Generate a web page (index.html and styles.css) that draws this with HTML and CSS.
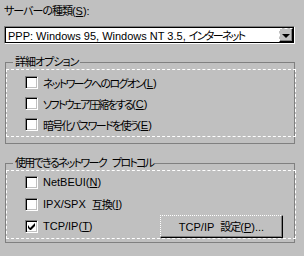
FILE: index.html
```html
<!DOCTYPE html>
<html lang="ja">
<head>
    <meta charset="UTF-8">
    <title>サーバーの種類</title>
    <link rel="stylesheet" href="styles.css">
</head>
<body>
    <div class="dialog">
        <div class="field-label"><span class="ja">サーバーの種類</span>(<u>S</u>):</div>
        <div class="combo">
            <span class="combo-text">PPP: Windows 95, Windows NT 3.5, <span class="ja tight">インターネット</span></span>
            <span class="combo-button"><span class="arrow"></span></span>
        </div>

        <!-- Advanced options -->
        <fieldset class="group group-options">
            <legend><span class="ja">詳細オプション</span></legend>
            <label class="row"><span class="check"></span><span class="ja tight">ネットワークへのログオン</span>(<u>L</u>)</label>
            <label class="row"><span class="check"></span><span class="ja tight">ソフトウェア圧縮をする</span>(<u>C</u>)</label>
            <label class="row"><span class="check"></span><span class="ja tight">暗号化パスワードを使う</span>(<u>E</u>)</label>
        </fieldset>

        <!-- Allowed protocols -->
        <fieldset class="group group-protocols">
            <legend><span class="ja tight">使用できるネットワーク</span><span class="ja tight gap">プロトコル</span></legend>
            <label class="row"><span class="check"></span>NetBEUI(<u>N</u>)</label>
            <label class="row"><span class="check"></span>IPX/SPX<span class="ja gap">互換</span>(<u>I</u>)</label>
            <div class="row">
                <label class="row-label"><span class="check checked">
                    <svg width="7" height="7" viewBox="0 0 7 7"><path d="M0 2v3l2 2h1l4-4V0L2 5z" fill="#000"/></svg>
                </span>TCP/IP(<u>T</u>)</label>
                <button class="btn">TCP/IP<span class="ja gap">設定</span>(<u>P</u>)...</button>
            </div>
        </fieldset>
    </div>
</body>
</html>
```

FILE: styles.css
```css
body {
    margin: 0;
    background-color: #c0c0c0;
    font-family: "Liberation Sans", "Noto Sans CJK JP", sans-serif;
    font-size: 11px;
    color: #000;
}
.ja {
    font-family: "Noto Sans CJK JP", sans-serif;
    font-feature-settings: "palt";
    letter-spacing: -1px;
}
.ja.tight {
    letter-spacing: -1.7px;
}
.gap {
    margin-left: 6px;
}
u {
    text-decoration: underline;
    text-underline-offset: 1px;
}
.dialog {
    width: 304px;
    height: 256px;
    display: flex;
    flex-direction: column;
    padding: 4px 0 0 4px;
    box-sizing: border-box;
}
.field-label {
    height: 13px;
    line-height: 13px;
}
.combo {
    margin-top: 9px;
    width: 291px;
    height: 18px;
    box-sizing: border-box;
    display: flex;
    align-items: center;
    background: #fff;
    border: 1px solid;
    border-style: solid dashed dashed solid;
    border-color: #808080 #fff #fff #808080;
    box-shadow: inset 1px 1px #000, inset -1px -1px #000;
    padding: 0 1px 0 3px;
}
.combo-text {
    flex: 1;
    white-space: nowrap;
}
.combo-button {
    width: 14px;
    height: 14px;
    box-sizing: border-box;
    background: #c0c0c0;
    border: 1px solid;
    border-style: dashed solid solid dashed;
    border-color: #fff #000 #000 #fff;
    box-shadow: inset -1px -1px #808080;
    display: flex;
    align-items: center;
    justify-content: center;
}
.arrow {
    width: 0;
    height: 0;
    border-left: 4px solid transparent;
    border-right: 4px solid transparent;
    border-top: 4px solid #000;
    margin-top: 1px;
}
.group {
    position: relative;
    margin: 0 0 0 1px;
    width: 290px;
    box-sizing: border-box;
    border: 1px solid #808080;
    padding: 0 11px 0 19px;
    min-width: 0;
}
.group::before {
    content: '';
    position: absolute;
    top: 0;
    left: 0;
    right: -2px;
    bottom: -2px;
    border: 1px dashed #fff;
    pointer-events: none;
}
.group legend {
    position: relative;
    z-index: 1;
    margin-left: -12px;
    padding: 0 2px;
    background: #c0c0c0;
    line-height: 13px;
}
.group-options {
    margin-top: 11px;
    height: 89px;
    padding-top: 3px;
}
.group-options .row {
    height: 21px;
}
.group-protocols {
    margin-top: 12px;
    height: 87px;
    padding-top: 1px;
}
.group-protocols .row {
    height: 22px;
}
.row {
    display: flex;
    align-items: center;
}
.row-label {
    display: flex;
    align-items: center;
}
.check {
    width: 13px;
    height: 13px;
    box-sizing: border-box;
    margin-right: 5px;
    background: #fff;
    border: 1px solid;
    border-style: solid dashed dashed solid;
    border-color: #808080 #fff #fff #808080;
    box-shadow: inset 1px 1px #000, inset -1px -1px #c0c0c0;
    display: flex;
    align-items: center;
    justify-content: center;
}
.btn {
    margin-left: auto;
    width: 123px;
    height: 23px;
    font: inherit;
    color: #000;
    background: #c0c0c0;
    border: 1px solid;
    border-style: dotted solid solid dotted;
    border-color: #fff #000 #000 #fff;
    box-shadow: inset -1px -1px #808080;
    padding: 0;
}
```
